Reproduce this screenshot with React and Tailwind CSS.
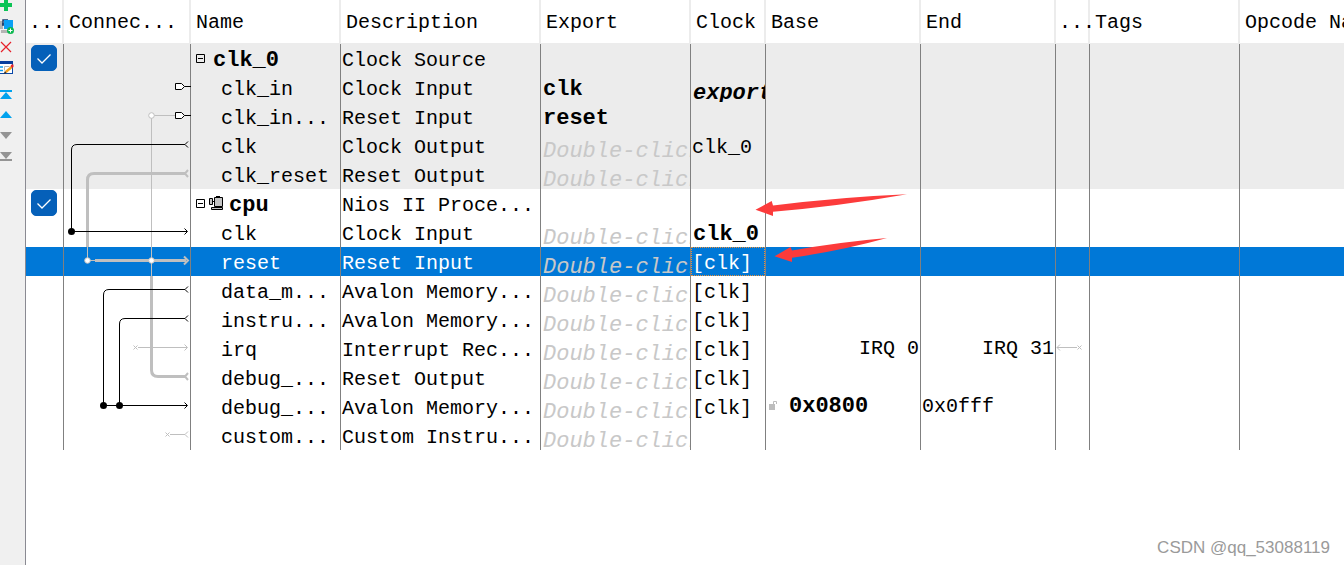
import { useState } from "react";
import clsx from "clsx";

const columns = [
  { label: "...", width: "w-[38px]", pad: "pl-[3px]" },
  { label: "Connec...", width: "w-[127px]", pad: "pl-[5px]" },
  { label: "Name", width: "w-[150px]", pad: "pl-[5px]" },
  { label: "Description", width: "w-[200px]", pad: "pl-[5px]" },
  { label: "Export", width: "w-[150px]", pad: "pl-[5px]" },
  { label: "Clock", width: "w-[75px]", pad: "pl-[5px]" },
  { label: "Base", width: "w-[155px]", pad: "pl-[5px]" },
  { label: "End", width: "w-[135px]", pad: "pl-[5px]" },
  { label: "...", width: "w-[34px]", pad: "pl-[3px]" },
  { label: "Tags", width: "w-[150px]", pad: "pl-[5px]" },
  { label: "Opcode Name", width: "", pad: "pl-[5px]" },
];

const HINT = "Double-click";

const rows = [
  { module: true, name: "clk_0", description: "Clock Source", shaded: true },
  { name: "clk_in", description: "Clock Input", exported: "clk", clock: "export", clockStyle: "exported", shaded: true },
  { name: "clk_in...", description: "Reset Input", exported: "reset", shaded: true },
  { name: "clk", description: "Clock Output", hint: true, clock: "clk_0", shaded: true },
  { name: "clk_reset", description: "Reset Output", hint: true, shaded: true },
  { module: true, chip: true, name: "cpu", description: "Nios II Proce..." },
  { name: "clk", description: "Clock Input", hint: true, clock: "clk_0", clockStyle: "bold" },
  { name: "reset", description: "Reset Input", hint: true, clock: "[clk]" },
  { name: "data_m...", description: "Avalon Memory...", hint: true, clock: "[clk]" },
  { name: "instru...", description: "Avalon Memory...", hint: true, clock: "[clk]" },
  { name: "irq", description: "Interrupt Rec...", hint: true, clock: "[clk]", base: "IRQ 0", end: "IRQ 31", irq: true },
  { name: "debug_...", description: "Reset Output", hint: true, clock: "[clk]" },
  { name: "debug_...", description: "Avalon Memory...", hint: true, clock: "[clk]", base: "0x0800", end: "0x0fff", locked: true },
  { name: "custom...", description: "Custom Instru...", hint: true },
];

function ToolButton({ label, className, viewBox = "0 0 16 21", children }) {
  return (
    <button type="button" aria-label={label} className={clsx("block w-4", className || "h-[21px]")}>
      <svg viewBox={viewBox} className="h-full w-4" aria-hidden="true">
        {children}
      </svg>
    </button>
  );
}

function Toolbar() {
  return (
    <aside className="flex w-[26px] shrink-0 flex-col border-r border-[#8a8a92] bg-[#f0f0f0]">
      <ToolButton label="Add" className="h-4" viewBox="0 0 16 16">
        <path d="M4 0h4v3h4v4H8v4H4V7H0V3h4z" fill="#0cc355" />
      </ToolButton>
      <ToolButton label="Add instance">
        <rect x="0" y="5" width="3" height="8" fill="#b4b4b4" />
        <path d="M3 10V4h5M2 8h2" stroke="#1d3c6b" strokeWidth="1.5" fill="none" />
        <rect x="4" y="4" width="9" height="9" fill="#0aa0f4" />
        <rect x="1" y="14" width="7" height="3" fill="#b4b4b4" />
        <circle cx="10.500" cy="14.500" r="3.500" fill="#0cb850" />
        <path d="M8.500 14.500h4M10.500 12.500v4" stroke="#fff" />
      </ToolButton>
      <ToolButton label="Remove">
        <path d="M1 5l10 10M11 5L1 15" stroke="#e6202a" strokeWidth="1.200" />
      </ToolButton>
      <ToolButton label="Edit">
        <rect x="-2" y="3.500" width="14.500" height="12" fill="#fff" stroke="#0a48a8" />
        <rect x="0" y="3" width="13" height="3" fill="#0a3e9c" />
        <path d="M0 9h3M0 12.500h3" stroke="#0a9cf0" strokeWidth="1.300" />
        <path d="M4.500 8.500h5M4.500 8.500v4" stroke="#b4b4b4" fill="none" />
        <path d="M5 13l6-5 1.500 2-6 5z" fill="#f5a11c" />
        <path d="M10.500 8l1-1.500h2V9L12 10z" fill="#e6202a" />
        <path d="M3.500 16l1.500-3 1.500 2z" fill="#3c3020" />
      </ToolButton>
      <div className="flex flex-col pt-[5px]">
        <ToolButton label="Move to top">
          <path d="M0 6h12v2H0zM6 8l6 7H0z" fill="#00a2ee" />
        </ToolButton>
        <ToolButton label="Move up">
          <path d="M6 6l6 7H0z" fill="#00a2ee" />
        </ToolButton>
        <ToolButton label="Move down">
          <path d="M0 6h12l-6 7z" fill="#949494" />
        </ToolButton>
        <ToolButton label="Move to bottom">
          <path d="M0 5h12l-6 7zM0 12h12v2H0z" fill="#949494" />
        </ToolButton>
      </div>
    </aside>
  );
}

// Wires between the ports, one 29px band for each row of the table
function Connections() {
  return (
    <svg
      width="127"
      height="406"
      viewBox="64 44 127 406"
      fill="none"
      className="pointer-events-none absolute top-0 left-0 z-10 max-w-none"
      aria-hidden="true">
      <g stroke="#bfbfbf">
        <path d="M151.500 118V276M154 115.500H175" />
        <path d="M185 173.500H94Q87.500 173.500 87.500 180V247" strokeWidth="3" />
        <path d="M87.500 247V260.500H95" />
        <path d="M95 260.500H186" strokeWidth="3" />
        <path d="M151.500 276V370Q151.500 376.500 158 376.500H185" strokeWidth="3" />
        <path d="M188 170l-3 3.500 3 3.500M188 373l-3 3.500 3 3.500" strokeWidth="2" />
        <path d="M184 256.500l4 4-4 4" strokeWidth="2" />
        <path d="M138 347.500H187M184.500 344.500l3 3-3 3M133.500 345.500l4 4M137.500 345.500l-4 4" />
        <path d="M170 434.500H185M188 431.500l-3 3 3 3M165.500 432.500l4 4M169.500 432.500l-4 4" />
        <circle cx="151.500" cy="115.500" r="2.800" fill="#fff" />
        <circle cx="151.500" cy="260.500" r="2.800" fill="#fff" />
        <circle cx="87.500" cy="260.500" r="2.800" fill="#fff" />
      </g>
      <g stroke="#000">
        <path d="M175.500 83.500h6l3 3-3 3h-6zM184.500 86.500H191" fill="#fff" />
        <path d="M175.500 112.500h6l3 3-3 3h-6zM184.500 115.500H191" fill="#fff" />
        <path d="M185 144.500H77Q71.500 144.500 71.500 150V231.500H187" />
        <path d="M185 289.500H109Q103.500 289.500 103.500 295V405.500H187" />
        <path d="M185 318.500H125Q119.500 318.500 119.500 324V405.500" />
        <path d="M188 141.500l-3 3 3 3M188 286.500l-3 3 3 3M188 315.500l-3 3 3 3" />
        <path d="M184.500 228.500l3 3-3 3M184.500 402.500l3 3-3 3" />
      </g>
      <g fill="#000">
        <circle cx="71.500" cy="231.500" r="3.500" />
        <circle cx="103.500" cy="405.500" r="3.500" />
        <circle cx="119.500" cy="405.500" r="3.500" />
      </g>
    </svg>
  );
}

function UseBox({ name }) {
  const [checked, setChecked] = useState(true);

  return (
    <label className="ml-[5px] grid h-[29px] w-[26px] content-start pt-px">
      <input
        type="checkbox"
        aria-label={`Use ${name}`}
        checked={checked}
        onChange={(e) => setChecked(e.target.checked)}
        className="col-start-1 row-start-1 size-[26px] appearance-none rounded-[5px] border border-[#0560b9] bg-white checked:bg-[#0560b9]"
      />
      {checked && (
        <svg viewBox="0 0 26 26" className="pointer-events-none col-start-1 row-start-1 size-[26px]" aria-hidden="true">
          <path d="M6.500 13.500l4.500 4.500 8.500-8.500" fill="none" stroke="#fff" strokeWidth="1.300" />
        </svg>
      )}
    </label>
  );
}

function ChipIcon() {
  return (
    <svg viewBox="0 0 15 15" className="ml-1 size-[15px]" aria-hidden="true">
      <path d="M.5 2.500h3v6h-3zM5.500 1.500h8v9h-8zM2.500 11.500h11v2h-11z" fill="#c4c4c4" stroke="#000" />
      <path d="M7 .5h4M4 5.500h2M6.500 10.500h5" stroke="#000" />
    </svg>
  );
}

function NameCell({ row }) {
  if (!row.module) {
    return <div className="h-[29px] overflow-hidden pt-1 pl-[30px] leading-[25px] whitespace-pre">{row.name}</div>;
  }
  return (
    <div className="flex h-[29px] overflow-hidden pl-[5px]">
      <button type="button" aria-label={`Collapse ${row.name}`} className="flex items-center">
        <svg viewBox="0 0 9 9" className="size-[9px]" aria-hidden="true">
          <path d="M.5.5h8v8h-8zM2 4.500h5" fill="none" stroke="#000" />
        </svg>
      </button>
      {row.chip && (
        <span className="flex items-center">
          <ChipIcon />
        </span>
      )}
      <span className={clsx("pt-1 text-[22px] leading-[25px] font-bold", row.chip ? "pl-[5px]" : "pl-2")}>{row.name}</span>
    </div>
  );
}

function Row({ row, index, selected, onSelect }) {
  const text = "h-[29px] overflow-hidden pt-1 pl-px leading-[25px] whitespace-pre";
  const strong = "h-[29px] overflow-hidden pt-1 pl-[2px] text-[22px] leading-[25px] font-bold whitespace-pre";
  const slanted = "h-[29px] overflow-hidden pt-2 pl-[2px] text-[22px] leading-[25px] italic whitespace-pre";
  const td = "border-r border-[#808080] p-0";

  return (
    <tr
      onClick={onSelect}
      className={clsx(selected ? "bg-[#0078d7] text-white" : row.shaded ? "bg-[#ececec]" : "bg-white")}>
      <td className={td}>{row.module && <UseBox name={row.name} />}</td>
      <td className={td}>
        <div className="relative h-[29px]">{index === 0 && <Connections />}</div>
      </td>
      <td className={td}>
        <NameCell row={row} />
      </td>
      <td className={td}>
        <div className={text}>{row.description}</div>
      </td>
      <td className={td}>
        {row.exported && <div className={strong}>{row.exported}</div>}
        {row.hint && <div className={clsx(slanted, "text-[#c8c8c8]")}>{HINT}</div>}
      </td>
      <td className={td}>
        <div
          className={clsx(
            row.clockStyle === "exported" ? [slanted, "font-bold"] : row.clockStyle === "bold" ? strong : text,
            selected && "outline-1 -outline-offset-1 outline-[#e8913c] outline-dotted"
          )}>
          {row.clock}
        </div>
      </td>
      <td className={td}>
        {row.locked ? (
          <div className="flex h-[29px] overflow-hidden pl-[3px]">
            <svg viewBox="0 0 8 29" className="h-[29px] w-2" aria-hidden="true">
              <path d="M0 12h6v6H0z" fill="#bdbdbd" />
              <path d="M4.500 12V9.500h3V12" fill="none" stroke="#bdbdbd" />
            </svg>
            <span className="pl-3 text-[22px] leading-[29px] font-bold">{row.base}</span>
          </div>
        ) : (
          <div className="h-[29px] overflow-hidden pr-px text-right leading-[29px]">{row.base}</div>
        )}
      </td>
      <td className={td}>
        <div className={clsx("h-[29px] overflow-hidden pr-px pl-px leading-[29px]", row.irq && "text-right")}>
          {row.end}
        </div>
      </td>
      <td className={td}>
        {row.irq && (
          <svg viewBox="0 0 28 29" className="h-[29px] w-7" aria-hidden="true">
            <path
              d="M4 10.500l-3 3 3 3M1 13.500h20M21.500 11.500l4 4M25.500 11.500l-4 4"
              fill="none"
              stroke="#bfbfbf"
            />
          </svg>
        )}
      </td>
      <td className={td} />
      <td className="p-0" />
    </tr>
  );
}

function Arrows() {
  return (
    <svg
      width="154"
      height="72"
      viewBox="754 192 154 72"
      fill="#fc3b3b"
      className="pointer-events-none absolute top-[192px] left-[728px] z-20 max-w-none"
      aria-hidden="true">
      <path d="M755.500 209.700L771.700 201l1.300 4.500Q840 197 907 194.200 840 206 773 211.700V216z" />
      <path d="M774.500 256.300L790.500 247l1.500 3.500Q840 242 887 238 840 251 792 257.700V262z" />
    </svg>
  );
}

export default function App() {
  const [selected, setSelected] = useState(7);

  return (
    <div className="relative flex min-h-screen bg-white text-black">
      <Toolbar />
      <main className="relative min-w-0 flex-1 overflow-hidden">
        <table className="w-full table-fixed border-separate border-spacing-0 font-['Liberation_Mono',monospace] text-[20px]">
          <thead>
            <tr>
              {columns.map((column, i) => (
                <th
                  key={i}
                  scope="col"
                  className={clsx("border-b border-[#ececec] p-0 text-left font-normal", i < 10 && "border-r-2", column.width)}>
                  <div className={clsx("h-[43px] pt-1 leading-[37px] whitespace-pre", column.pad, i === 10 && "overflow-hidden")}>
                    {column.label}
                  </div>
                </th>
              ))}
            </tr>
          </thead>
          <tbody>
            {rows.map((row, i) => (
              <Row key={i} row={row} index={i} selected={i === selected} onSelect={() => setSelected(i)} />
            ))}
          </tbody>
        </table>
        <Arrows />
      </main>
      <p className="absolute right-[14px] bottom-[7px] font-['Liberation_Sans',sans-serif] text-[17px] leading-5 text-[#9a9a9a]">
        CSDN @qq_53088119
      </p>
    </div>
  );
}
